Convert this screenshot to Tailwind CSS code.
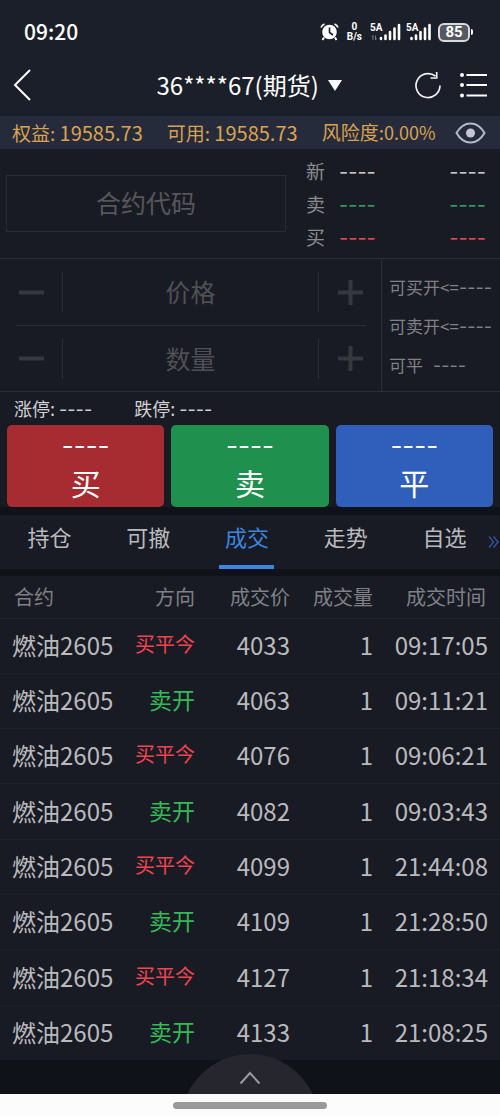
<!DOCTYPE html>
<html lang="zh-CN">
<head>
<meta charset="utf-8">
<meta name="viewport" content="width=device-width, initial-scale=1">
<title>期货交易</title>
<script src="https://cdn.jsdelivr.net/npm/@tailwindcss/browser@4"></script>
</head>
<body class="flex min-h-screen flex-col bg-[#0f1219] font-['Noto_Sans_CJK_SC',sans-serif] text-[#b9babe]">

<header class="bg-[#1b1f2a] text-white">
  <div class="flex h-[60px] items-center justify-between pt-1 pr-[27px] pl-6">
    <time class="text-[21px] font-medium">09:20</time>
    <div class="flex items-center">
      <svg class="mr-2 h-[18px] w-[19px]" viewBox="0 0 19 18" role="img" aria-label="闹钟">
        <path d="M1 4.500Q2 2 4.500 1M14.500 1Q17 2 18 4.500" fill="none" stroke="#fff" stroke-width="1.600"/>
        <circle cx="9.500" cy="9" r="7.300" fill="#fff"/>
        <path d="M4 14.500L2.500 17M15 14.500L16.500 17" stroke="#fff" stroke-width="2"/>
        <path d="M9.500 4.500V9.500L13 12" fill="none" stroke="#1b1f2a" stroke-width="1.600"/>
      </svg>
      <div class="mr-2 text-center font-[Roboto,sans-serif] text-[10px] leading-[10px] font-bold">0<br>B/s</div>
      <svg class="mr-1 h-[18px] w-[32px]" viewBox="0 0 32 18" role="img" aria-label="信号 5A">
        <text x="0" y="8" font-family="Roboto, sans-serif" font-weight="700" font-size="10" fill="#fff">5A</text>
        <path d="M3 17V12.500M2 14L3 12.500M5.500 12.500V17L6.500 15.500" fill="none" stroke="#777a82" stroke-width="1"/>
        <path d="M11 16V15M15.500 16V12.500M20 16V9M24.500 16V5.500M29 16V2" stroke="#fff" stroke-width="2.600" stroke-linecap="round"/>
      </svg>
      <svg class="mr-1.5 h-[18px] w-[26px]" viewBox="0 0 26 18" role="img" aria-label="信号 5A">
        <text x="0" y="8" font-family="Roboto, sans-serif" font-weight="700" font-size="10" fill="#fff">5A</text>
        <path d="M5.500 16V15M10 16V12.500M14.500 16V9M19 16V5.500M23.500 16V2" stroke="#fff" stroke-width="2.600" stroke-linecap="round"/>
      </svg>
      <div class="flex h-[19px] w-8 items-center justify-center rounded-md border-2 border-[#d9dadd] bg-[#555861] font-[Roboto,sans-serif] text-[15px] font-bold">85</div>
      <div class="ml-px h-[6px] w-[2px] rounded-r bg-white"></div>
    </div>
  </div>
  <div class="flex h-14 items-center justify-between pr-3 pb-1.5 pl-3">
    <button type="button" aria-label="返回" class="flex w-[72px]">
      <svg class="h-8 w-5" viewBox="0 0 20 32" fill="none" stroke="#fff" stroke-width="2"><path d="M18 1L3 16L18 31"/></svg>
    </button>
    <label class="flex items-center gap-2">
      <select aria-label="账户" class="appearance-none bg-transparent text-[24px] leading-9 outline-none"><option>36****67(期货)</option></select>
      <svg class="h-[11px] w-[14px]" viewBox="0 0 14 11"><path d="M0 0H14L7 11Z" fill="#fff"/></svg>
    </label>
    <div class="flex items-center gap-[18px]">
      <button type="button" aria-label="刷新">
        <svg class="h-7 w-7" viewBox="0 0 28 28" fill="none" stroke="#f2f2f4" stroke-width="1.700"><path d="M21.500 5.200A12 12 0 1 0 26 14.500"/><path d="M22.700 1V7H16.500"/></svg>
      </button>
      <button type="button" aria-label="菜单">
        <svg class="h-7 w-7" viewBox="0 0 28 28" fill="#fff"><circle cx="2" cy="4" r="2"/><circle cx="2" cy="14" r="2"/><circle cx="2" cy="24.500" r="2"/><path d="M6.500 3H27V5H6.500ZM6.500 13H27V15H6.500ZM6.500 23.500H27V25.500H6.500Z"/></svg>
      </button>
    </div>
  </div>
</header>

<section aria-label="账户资金" class="flex h-[33px] items-center gap-6 bg-[#262b3b] pr-[14px] pl-3 text-[19px] whitespace-nowrap text-[#d9a252]">
  <span>权益: <span class="text-[20px]">19585.73</span></span>
  <span>可用: <span class="text-[20px]">19585.73</span></span>
  <span>风险度:<span class="text-[18px]">0.00%</span></span>
  <button type="button" aria-label="显示或隐藏资金" class="-ml-6 flex flex-1 justify-end">
    <svg class="h-[22px] w-[31px]" viewBox="0 0 31 22"><path d="M1.500 11Q7 1.500 15.500 1.500T29.500 11Q24 20.500 15.500 20.500T1.500 11Z" fill="none" stroke="#b6b9cc" stroke-width="2"/><circle cx="15.500" cy="11" r="4.500" fill="#c4c6d8"/></svg>
  </button>
</section>

<main class="flex flex-col">
  <form class="bg-[#191b24]">
    <div class="flex h-[110px] items-center border-b border-[#2b2e36] pr-[14px] pl-[6px]">
      <input aria-label="合约代码" placeholder="合约代码" class="h-[57px] w-0 flex-1 border border-[#292c34] bg-transparent pb-1 text-center text-[25px] outline-none placeholder:text-[#55575c]">
      <dl class="ml-5 grid w-[180px] grid-cols-[33px_1fr_auto] items-center text-[19px] leading-[33px] text-[#8a8c91]">
        <dt>新</dt><dd class="pt-1 font-[Inter,sans-serif] text-[20px] leading-[29px] text-[#c5c6ca]">----</dd><dd class="pt-1 font-[Inter,sans-serif] text-[20px] leading-[29px] text-[#c5c6ca]">----</dd>
        <dt>卖</dt><dd class="pt-1 font-[Inter,sans-serif] text-[20px] leading-[29px] text-[#2fa35b]">----</dd><dd class="pt-1 font-[Inter,sans-serif] text-[20px] leading-[29px] text-[#2fa35b]">----</dd>
        <dt>买</dt><dd class="pt-1 font-[Inter,sans-serif] text-[20px] leading-[29px] text-[#e04a55]">----</dd><dd class="pt-1 font-[Inter,sans-serif] text-[20px] leading-[29px] text-[#e04a55]">----</dd>
      </dl>
    </div>

    <div class="flex border-b border-[#2b2e36]">
      <div class="min-w-0 flex-1 border-r border-[#2b2e36] px-4 pr-[15px]">
        <div class="flex h-[67px] items-center border-b border-[#2b2e36]">
          <button type="button" aria-label="减少价格" class="flex h-10 w-[47px] items-center border-r border-[#2b2e36] pl-[3px]"><svg class="h-[25px] w-[25px]" viewBox="0 0 25 25"><path d="M0 12.500H25" stroke="#36383f" stroke-width="4"/></svg></button>
          <input aria-label="价格" placeholder="价格" inputmode="decimal" class="h-10 w-0 flex-1 bg-transparent pb-0.5 text-center text-[25px] outline-none placeholder:text-[#4e5055]">
          <button type="button" aria-label="增加价格" class="flex h-10 w-[48px] items-center justify-end border-l border-[#2b2e36] pr-[3px]"><svg class="h-[25px] w-[25px]" viewBox="0 0 25 25"><path d="M0 12.500H25M12.500 0V25" stroke="#36383f" stroke-width="4"/></svg></button>
        </div>
        <div class="flex h-[65px] items-center">
          <button type="button" aria-label="减少数量" class="flex h-10 w-[47px] items-center border-r border-[#2b2e36] pl-[3px]"><svg class="h-[25px] w-[25px]" viewBox="0 0 25 25"><path d="M0 12.500H25" stroke="#36383f" stroke-width="4"/></svg></button>
          <input aria-label="数量" placeholder="数量" inputmode="numeric" class="h-10 w-0 flex-1 bg-transparent pb-0.5 text-center text-[25px] outline-none placeholder:text-[#4e5055]">
          <button type="button" aria-label="增加数量" class="flex h-10 w-[48px] items-center justify-end border-l border-[#2b2e36] pr-[3px]"><svg class="h-[25px] w-[25px]" viewBox="0 0 25 25"><path d="M0 12.500H25M12.500 0V25" stroke="#36383f" stroke-width="4"/></svg></button>
        </div>
      </div>
      <div class="flex w-[118px] flex-col justify-center pl-[7px] text-[17px] leading-[39px] whitespace-nowrap text-[#7f8186]">
        <p>可买开&lt;=<span class="font-[Inter,sans-serif] text-[18px] leading-none">----</span></p>
        <p>可卖开&lt;=<span class="font-[Inter,sans-serif] text-[18px] leading-none">----</span></p>
        <p>可平<span class="ml-2.5 font-[Inter,sans-serif] text-[18px] leading-none">----</span></p>
      </div>
    </div>

    <div class="flex h-[33px] items-center gap-[42px] pl-[14px] text-[18px] text-[#d0d1d4]">
      <p>涨停: <span class="font-[Inter,sans-serif] leading-none">----</span></p>
      <p>跌停: <span class="font-[Inter,sans-serif] leading-none">----</span></p>
    </div>

    <div class="grid grid-cols-3 gap-[7px] px-[7px] text-white">
      <button type="button" class="flex h-[82px] flex-col items-center rounded-[5px] bg-[#a72c32]"><span class="font-[Inter,sans-serif] text-[26px] leading-[42px]">----</span><span class="text-[30px] leading-[30px]">买</span></button>
      <button type="button" class="flex h-[82px] flex-col items-center rounded-[5px] bg-[#20904f]"><span class="font-[Inter,sans-serif] text-[26px] leading-[42px]">----</span><span class="text-[30px] leading-[30px]">卖</span></button>
      <button type="button" class="flex h-[82px] flex-col items-center rounded-[5px] bg-[#305fbb]"><span class="font-[Inter,sans-serif] text-[26px] leading-[42px]">----</span><span class="text-[30px] leading-[30px]">平</span></button>
    </div>
  </form>

  <nav aria-label="交易列表" class="mt-2 flex h-[54px] bg-[#191b24] text-[22px] leading-[42px]">
    <div role="tablist" class="grid flex-1 grid-cols-5">
      <button type="button" role="tab" class="flex justify-center">持仓</button>
      <button type="button" role="tab" class="flex justify-center">可撤</button>
      <button type="button" role="tab" aria-selected="true" class="flex justify-center text-[#3a86e0]"><span class="h-[54px] w-[55px] border-b-4 border-[#3a86e0]">成交</span></button>
      <button type="button" role="tab" class="flex justify-center">走势</button>
      <button type="button" role="tab" class="flex justify-center">自选</button>
    </div>
    <button type="button" aria-label="更多" class="-ml-[6px] w-3"><svg class="h-[12px] w-[11px]" viewBox="0 0 11 12" fill="none" stroke="#3158a8" stroke-width="1.200"><path d="M1 0.500L5.500 6L1 11.500M5.500 0.500L10 6L5.500 11.500"/></svg></button>
  </nav>

  <table class="mt-[7px] h-[484px] w-full table-fixed bg-[#191b24] text-right text-[24px] leading-9 whitespace-nowrap">
    <thead class="text-[20px] text-[#7f8186]">
      <tr class="h-[42px] border-b border-[#20242d]">
        <th scope="col" class="w-[24%] pl-[14px] text-left font-normal">合约</th>
        <th scope="col" class="w-[15%] font-normal">方向</th>
        <th scope="col" class="w-[19%] font-normal">成交价</th>
        <th scope="col" class="w-[17%] pr-0.5 font-normal">成交量</th>
        <th scope="col" class="w-[25%] pr-[14px] font-normal">成交时间</th>
      </tr>
    </thead>
    <tbody>
      <tr class="border-b border-[#1d2029]"><td class="pb-0.5 pl-3 text-left">燃油2605</td><td class="pb-1 text-[20px] text-[#f04450]">买平今</td><td class="pb-0.5">4033</td><td class="pr-0.5 pb-0.5">1</td><td class="pr-3 pb-0.5">09:17:05</td></tr>
      <tr class="border-b border-[#1d2029]"><td class="pb-0.5 pl-3 text-left">燃油2605</td><td class="pb-1 text-[23px] text-[#34b956]">卖开</td><td class="pb-0.5">4063</td><td class="pr-0.5 pb-0.5">1</td><td class="pr-3 pb-0.5">09:11:21</td></tr>
      <tr class="border-b border-[#1d2029]"><td class="pb-0.5 pl-3 text-left">燃油2605</td><td class="pb-1 text-[20px] text-[#f04450]">买平今</td><td class="pb-0.5">4076</td><td class="pr-0.5 pb-0.5">1</td><td class="pr-3 pb-0.5">09:06:21</td></tr>
      <tr class="border-b border-[#1d2029]"><td class="pb-0.5 pl-3 text-left">燃油2605</td><td class="pb-1 text-[23px] text-[#34b956]">卖开</td><td class="pb-0.5">4082</td><td class="pr-0.5 pb-0.5">1</td><td class="pr-3 pb-0.5">09:03:43</td></tr>
      <tr class="border-b border-[#1d2029]"><td class="pb-0.5 pl-3 text-left">燃油2605</td><td class="pb-1 text-[20px] text-[#f04450]">买平今</td><td class="pb-0.5">4099</td><td class="pr-0.5 pb-0.5">1</td><td class="pr-3 pb-0.5">21:44:08</td></tr>
      <tr class="border-b border-[#1d2029]"><td class="pb-0.5 pl-3 text-left">燃油2605</td><td class="pb-1 text-[23px] text-[#34b956]">卖开</td><td class="pb-0.5">4109</td><td class="pr-0.5 pb-0.5">1</td><td class="pr-3 pb-0.5">21:28:50</td></tr>
      <tr class="border-b border-[#1d2029]"><td class="pb-0.5 pl-3 text-left">燃油2605</td><td class="pb-1 text-[20px] text-[#f04450]">买平今</td><td class="pb-0.5">4127</td><td class="pr-0.5 pb-0.5">1</td><td class="pr-3 pb-0.5">21:18:34</td></tr>
      <tr><td class="pb-0.5 pl-3 text-left">燃油2605</td><td class="pb-1 text-[23px] text-[#34b956]">卖开</td><td class="pb-0.5">4133</td><td class="pr-0.5 pb-0.5">1</td><td class="pr-3 pb-0.5">21:08:25</td></tr>
    </tbody>
  </table>
</main>

<footer class="relative mt-auto pt-[34px]">
  <button type="button" aria-label="展开" class="absolute inset-x-0 bottom-[22px] flex justify-center">
    <svg class="h-10 w-[126px]" viewBox="0 0 126 40"><circle cx="63" cy="69" r="69" fill="#25262e"/><path d="M53.500 29.500L63 19L72.500 29.500" fill="none" stroke="#9b9ca0" stroke-width="2"/></svg>
  </button>
  <div class="flex h-[22px] items-center justify-center bg-[#fcfcfc]"><div class="h-[7px] w-[154px] rounded-full bg-[#999]"></div></div>
</footer>
</body>
</html>
